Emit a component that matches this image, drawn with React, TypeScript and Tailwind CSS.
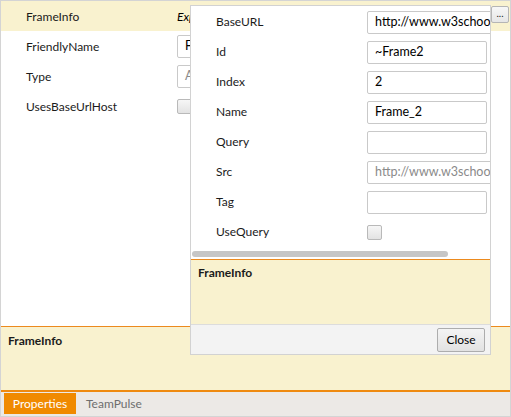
import React from 'react';

const font = 'font-["Lato",sans-serif]';

type Row = { label: string; value?: string; placeholder?: string; kind?: 'text' | 'check' | 'italic' };

const mainRows: Row[] = [
  { label: 'FrameInfo', value: 'Expandable', kind: 'italic' },
  { label: 'FriendlyName', value: 'Frame2' },
  { label: 'Type', placeholder: 'Auto' },
  { label: 'UsesBaseUrlHost', kind: 'check' },
];

const popupRows: Row[] = [
  { label: 'BaseURL', value: 'http://www.w3schools.com' },
  { label: 'Id', value: '~Frame2' },
  { label: 'Index', value: '2' },
  { label: 'Name', value: 'Frame_2' },
  { label: 'Query' },
  { label: 'Src', placeholder: 'http://www.w3schools.com' },
  { label: 'Tag' },
  { label: 'UseQuery', kind: 'check' },
];

const Check = () => (
  <div className="w-[15px] h-[15px] rounded-[2px] border border-[#b9b9b9] bg-gradient-to-b from-[#f6f6f6] to-[#e3e3e3]" />
);

const Value = ({ row, wide }: { row: Row; wide?: boolean }) => {
  if (row.kind === 'check') return <Check />;
  if (row.kind === 'italic') return <span className="italic text-[12px] text-black">{row.value}</span>;
  return (
    <div
      className={`h-[23px] ${wide ? 'w-[140px]' : 'w-[120px]'} shrink-0 border border-[#c9c9c9] rounded-[2px] bg-white flex items-center pl-[7px] text-[12.5px] overflow-hidden whitespace-nowrap`}
    >
      {row.value ? (
        <span className="text-black">{row.value}</span>
      ) : (
        <span className="text-[#8a8a8a]">{row.placeholder}</span>
      )}
    </div>
  );
};

export default function App() {
  return (
    <div className={`${font} relative w-[511px] h-[417px] border border-[#d4d4d4] flex flex-col bg-white text-[#1b1b1b] overflow-hidden`}>
      {/* property grid */}
      <div className="flex-1 flex flex-col">
        {mainRows.map((r, i) => (
          <div key={r.label} className={`h-[30px] flex items-center pt-[1px] ${i === 0 ? 'bg-[#f9f2cf]' : ''}`}>
            <div className="w-[176px] pl-[25px] text-[12px]">{r.label}</div>
            <Value row={r} />
          </div>
        ))}
      </div>

      {/* description */}
      <div className="h-[64px] border-t border-[#ec8a1e] bg-[#f9f2cf] px-[7px] pt-[5px] text-[12px] font-bold">
        FrameInfo
      </div>

      {/* tabs */}
      <div className="h-[26px] border-t-2 border-[#ef8a10] bg-[#ece9e6] flex items-start pl-[3px] text-[12px]">
        <div className="h-[21px] w-[72px] bg-[#f08a00] text-white flex items-center justify-center mt-[1px]">Properties</div>
        <div className="h-[21px] px-[10px] text-[#6e6e6e] flex items-center mt-[1px]">TeamPulse</div>
      </div>

      {/* ellipsis button */}
      <div className="absolute left-[490px] top-[5px] w-[18px] h-[17px] border border-[#b5b5b5] rounded-[2px] bg-gradient-to-b from-[#f7f7f7] to-[#e6e6e6] flex items-center justify-center text-[10px] leading-none pb-[4px]">
        ...
      </div>

      {/* dropdown editor */}
      <div className="absolute left-[189px] top-[4px] w-[301px] h-[350px] border border-[#d2d2d2] bg-white flex flex-col">
        <div className="flex-1 overflow-hidden flex flex-col pt-[1px]">
          {popupRows.map((r) => (
            <div key={r.label} className="h-[30px] flex items-center shrink-0 whitespace-nowrap">
              <div className="w-[176px] shrink-0 pl-[25px] text-[12px]">{r.label}</div>
              <Value row={r} wide={r.label === 'BaseURL' || r.label === 'Src'} />
            </div>
          ))}
          <div className="h-[11px] flex items-center px-[1px]">
            <div className="w-[256px] h-[6px] rounded-full bg-[#c6c6c6] mt-[2px]" />
          </div>
        </div>
        <div className="h-[65px] border-t border-[#ec8a1e] bg-[#f9f2cf] px-[7px] pt-[4px] text-[12px] font-bold">
          FrameInfo
        </div>
        <div className="h-[30px] border-t border-[#dcdcdc] bg-[#f3f3f3] flex items-center justify-end pr-[5px]">
          <div className="w-[48px] h-[24px] border border-[#adadad] rounded-[2px] bg-gradient-to-b from-[#f4f4f4] to-[#e2e2e2] flex items-center justify-center text-[12px] text-black">
            Close
          </div>
        </div>
      </div>
    </div>
  );
}
